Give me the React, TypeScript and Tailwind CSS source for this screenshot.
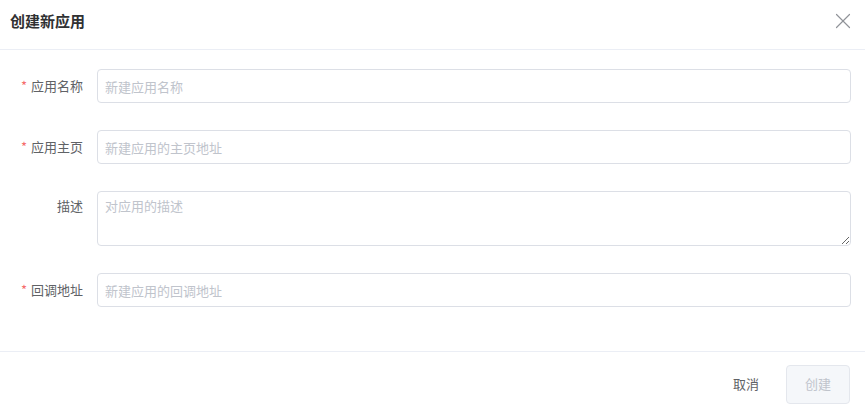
import { X } from "lucide-react";

type Field = {
  label: string;
  placeholder: string;
  required: boolean;
  multiline?: boolean;
};

const fields: Field[] = [
  { label: "应用名称", placeholder: "新建应用名称", required: true },
  { label: "应用主页", placeholder: "新建应用的主页地址", required: true },
  { label: "描述", placeholder: "对应用的描述", required: false, multiline: true },
  { label: "回调地址", placeholder: "新建应用的回调地址", required: true },
];

export default function App() {
  return (
    <div className="flex h-[413px] w-[865px] flex-col bg-white font-['Noto_Sans_CJK_SC','Noto_Sans',sans-serif] text-[13px] text-[#606266]">
      <header className="flex h-[50px] shrink-0 items-center justify-between border-b border-[#ebeef5] pb-[7px] pl-[10px] pr-[9px]">
        <h1 className="text-[15px] font-bold text-[#303133]">创建新应用</h1>
        <X className="h-[26px] w-[26px] text-[#909399]" strokeWidth={1.1} />
      </header>

      <form className="flex flex-1 flex-col gap-[27px] pt-[19px] pr-[14px]">
        {fields.map((field) => (
          <div key={field.label} className="flex">
            <label className={`flex w-[97px] shrink-0 justify-end pr-[14px] ${field.multiline ? "pt-[5px]" : "items-center"}`}>
              {field.required ? <span className="mr-[4px] text-[#f56c6c]">*</span> : null}
              {field.label}
            </label>
            {field.multiline ? (
              <textarea
                className="h-[55px] flex-1 rounded border border-[#dcdfe6] px-[7px] py-[4px] text-[13px] outline-none placeholder:text-[#c0c4cc]"
                placeholder={field.placeholder}
              />
            ) : (
              <input
                type="text"
                className="h-[34px] flex-1 rounded border border-[#dcdfe6] px-[7px] text-[13px] outline-none placeholder:text-[#c0c4cc]"
                placeholder={field.placeholder}
              />
            )}
          </div>
        ))}
      </form>

      <footer className="flex h-[62px] shrink-0 items-center justify-end gap-[27px] border-t border-[#ebeef5] pr-[15px] pt-[3px]">
        <button type="button" className="text-[13px] text-[#606266]">
          取消
        </button>
        <button type="button" disabled className="h-[39px] w-[64px] rounded border border-[#e4e7ed] bg-[#f5f7fa] text-[13px] text-[#c0c4cc]">
          创建
        </button>
      </footer>
    </div>
  );
}
